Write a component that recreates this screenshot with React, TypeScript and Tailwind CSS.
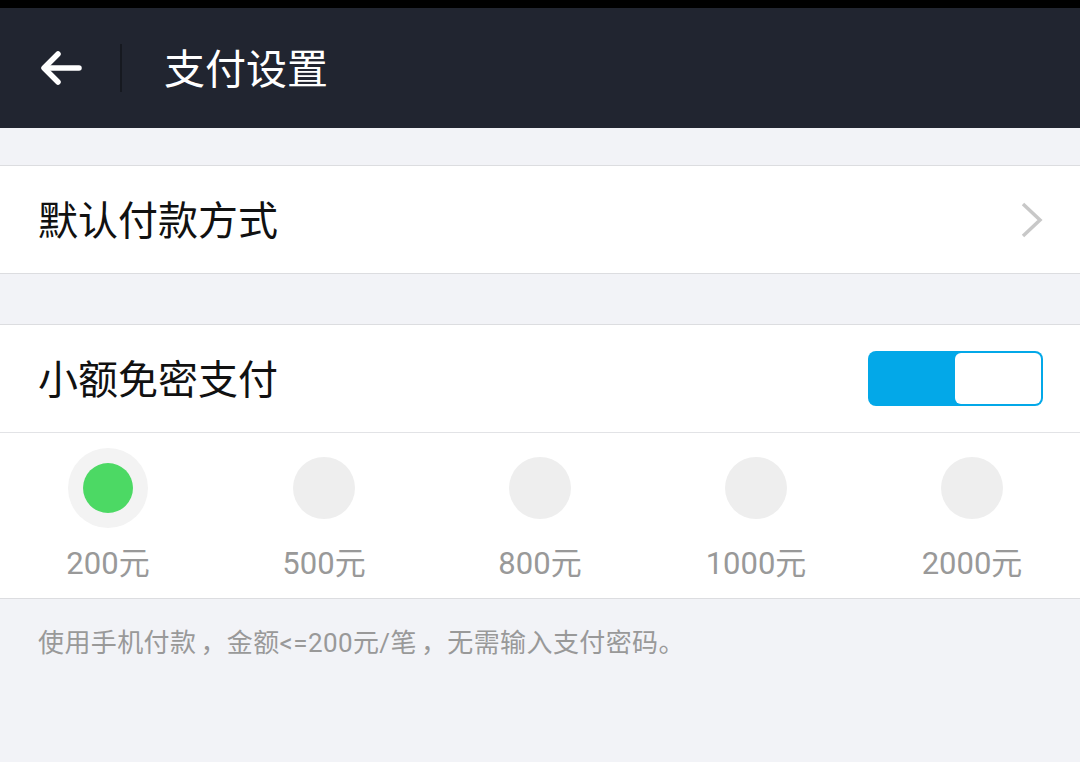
const amounts = ['200元', '500元', '800元', '1000元', '2000元'];

export default function App() {
  const selected = 0;

  return (
    <div
      className="w-[1080px] h-[762px] bg-[#f2f3f7] overflow-hidden"
      style={{ fontFamily: 'Roboto, "Noto Sans CJK SC", sans-serif' }}
    >
      <div className="h-[8px] bg-black" />
      <div className="h-[120px] bg-[#212530] flex items-center">
        <div className="w-[120px] flex items-center pl-[40px]">
          <svg width="42" height="36" viewBox="0 0 42 36" fill="none">
            <path d="M39 18H5" stroke="white" strokeWidth="5.5" strokeLinecap="round" />
            <path d="M18 4L4 18L18 32" stroke="white" strokeWidth="5.5" strokeLinecap="round" strokeLinejoin="round" />
          </svg>
        </div>
        <div className="w-[2px] h-[48px] bg-[#161920]" />
        <div className="ml-[42px] pt-[4px] text-white text-[41px] leading-none">支付设置</div>
      </div>

      <div className="h-[37px]" />
      <div className="bg-white border-y border-[#dcdde0] h-[109px] flex items-center justify-between pl-[38px] pr-[36px]">
        <span className="pt-[4px] text-[40px] text-[#111] leading-none">默认付款方式</span>
        <svg width="24" height="38" viewBox="0 0 24 38" fill="none">
          <path d="M3 3L20 19L3 35" stroke="#c8c8c8" strokeWidth="3.5" />
        </svg>
      </div>

      <div className="h-[50px]" />
      <div className="bg-white border-t border-[#dcdde0]">
        <div className="h-[108px] flex items-center justify-between pl-[38px] pr-[37px] border-b border-[#e2e3e6]">
          <span className="pt-[4px] text-[40px] text-[#111] leading-none">小额免密支付</span>
          <div className="w-[175px] h-[55px] rounded-[8px] bg-[#03a8e8] p-[2px] flex justify-end">
            <div className="w-[86px] h-full rounded-[6px] bg-white" />
          </div>
        </div>
        <div className="h-[166px] grid grid-cols-5 border-b border-[#dcdde0]">
          {amounts.map((a, i) => (
            <div key={a} className="flex flex-col items-center pt-[15px]">
              <div className="h-[80px] flex items-center justify-center">
                {i === selected ? (
                  <div className="w-[80px] h-[80px] rounded-full bg-[#f3f3f3] flex items-center justify-center">
                    <div className="w-[50px] h-[50px] rounded-full bg-[#4cd964]" />
                  </div>
                ) : (
                  <div className="w-[62px] h-[62px] rounded-full bg-[#eeeeee]" />
                )}
              </div>
              <span className="mt-[20px] text-[31px] text-[#999] leading-none">{a}</span>
            </div>
          ))}
        </div>
      </div>

      <div className="pl-[38px] pt-[31px] text-[26px] text-[#999] leading-none tracking-[0.4px]">
        使用手机付款<span className="ml-[4px]">，</span>金额&lt;=200元/笔<span className="ml-[4px]">，</span>无需输入支付密码。
      </div>
    </div>
  );
}
